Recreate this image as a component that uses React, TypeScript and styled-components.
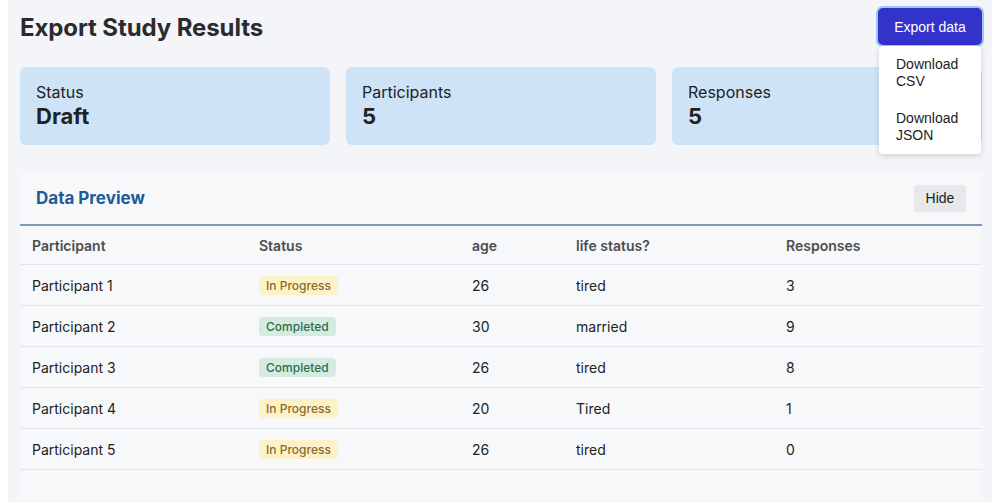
import React from "react";
import styled, { createGlobalStyle } from "styled-components";

const GlobalStyle = createGlobalStyle`
  body {
    margin: 0 10px 0 8px;
    background: #ffffff;
    font-family: Inter, "Noto Sans", sans-serif;
    color: #222;
    overflow: hidden;
  }
`;

type StatusKind = "progress" | "done";

interface Row {
  name: string;
  status: StatusKind;
  age: number;
  life: string;
  responses: number;
}

const rows: Row[] = [
  { name: "Participant 1", status: "progress", age: 26, life: "tired", responses: 3 },
  { name: "Participant 2", status: "done", age: 30, life: "married", responses: 9 },
  { name: "Participant 3", status: "done", age: 26, life: "tired", responses: 8 },
  { name: "Participant 4", status: "progress", age: 20, life: "Tired", responses: 1 },
  { name: "Participant 5", status: "progress", age: 26, life: "tired", responses: 0 },
];

const stats = [
  { label: "Status", value: "Draft" },
  { label: "Participants", value: "5" },
  { label: "Responses", value: "5" },
];

const App: React.FC = () => {
  return (
    <Page>
      <GlobalStyle />
      <Header>
        <Title>Export Study Results</Title>
        <ExportWrap>
          <ExportButton>Export data</ExportButton>
          <Menu>
            <MenuItem>Download CSV</MenuItem>
            <MenuItem>Download JSON</MenuItem>
          </Menu>
        </ExportWrap>
      </Header>

      <StatsGrid>
        {stats.map((s) => (
          <StatCard key={s.label}>
            <StatLabel>{s.label}</StatLabel>
            <StatValue>{s.value}</StatValue>
          </StatCard>
        ))}
      </StatsGrid>

      <Section>
        <SectionHeader>
          <SectionTitle>Data Preview</SectionTitle>
          <HideButton>Hide</HideButton>
        </SectionHeader>
        <Table>
          <colgroup>
            <col style={{ width: 227 }} />
            <col style={{ width: 213 }} />
            <col style={{ width: 104 }} />
            <col style={{ width: 210 }} />
            <col />
          </colgroup>
          <thead>
            <tr>
              <Th>Participant</Th>
              <Th>Status</Th>
              <Th>age</Th>
              <Th>life status?</Th>
              <Th>Responses</Th>
            </tr>
          </thead>
          <tbody>
            {rows.map((r) => (
              <tr key={r.name}>
                <Td>{r.name}</Td>
                <Td>
                  <Badge $kind={r.status}>
                    {r.status === "done" ? "Completed" : "In Progress"}
                  </Badge>
                </Td>
                <Td>{r.age}</Td>
                <Td>{r.life}</Td>
                <Td>{r.responses}</Td>
              </tr>
            ))}
          </tbody>
        </Table>
      </Section>
    </Page>
  );
};

export default App;

const Page = styled.div`
  background: #f3f5f9;
  min-height: 100vh;
  padding: 8px 10px 0 12px;
  box-sizing: border-box;
`;

const Header = styled.div`
  display: flex;
  justify-content: space-between;
  align-items: flex-start;
`;

const Title = styled.h1`
  margin: 5px 0 0;
  font-size: 24px;
  line-height: 30px;
  font-weight: 700;
  color: #2b2b2b;
  letter-spacing: -0.1px;
`;

const ExportWrap = styled.div`
  position: relative;
`;

const ExportButton = styled.button`
  display: block;
  width: 104px;
  height: 37px;
  background: #3333cc;
  color: #fff;
  border: none;
  border-radius: 5px;
  font-family: "Liberation Sans", Arial, sans-serif;
  font-size: 14px;
  box-shadow: 0 0 0 2px #9fc6ee;
  cursor: pointer;
`;

const Menu = styled.div`
  position: absolute;
  top: 38px;
  right: 1px;
  width: 102px;
  background: #fff;
  border-radius: 4px;
  box-shadow: 0 2px 6px rgba(0, 0, 0, 0.15);
  z-index: 2;
`;

const MenuItem = styled.div`
  padding: 10px 17px;
  font-family: "Liberation Sans", Arial, sans-serif;
  font-size: 14px;
  line-height: 17px;
  color: #222;
  cursor: pointer;
`;

const StatsGrid = styled.div`
  display: grid;
  grid-template-columns: repeat(3, 1fr);
  gap: 16px;
  margin-top: 22px;
`;

const StatCard = styled.div`
  background: #cfe3f7;
  border-radius: 6px;
  padding: 15px 16px 14px;
  height: 78px;
  box-sizing: border-box;
`;

const StatLabel = styled.div`
  font-size: 16px;
  line-height: 20px;
  color: #222;
`;

const StatValue = styled.div`
  font-size: 22px;
  line-height: 28px;
  font-weight: 700;
  color: #222;
`;

const Section = styled.section`
  margin-top: 27px;
  background: #f7f8fa;
  padding-bottom: 30px;
`;

const SectionHeader = styled.div`
  display: flex;
  justify-content: space-between;
  align-items: center;
  height: 52px;
  padding: 0 16px;
  border-bottom: 2px solid #7a9bbb;
`;

const SectionTitle = styled.h2`
  margin: 0;
  font-size: 17px;
  font-weight: 700;
  color: #1d5b9a;
`;

const HideButton = styled.button`
  height: 27px;
  width: 52px;
  border: none;
  border-radius: 4px;
  background: #e6e8eb;
  font-family: "Liberation Sans", Arial, sans-serif;
  font-size: 14px;
  color: #222;
  cursor: pointer;
`;

const Table = styled.table`
  width: 100%;
  border-collapse: collapse;
  table-layout: fixed;
`;

const Th = styled.th`
  text-align: left;
  height: 38px;
  padding: 0 12px;
  font-size: 14px;
  font-weight: 600;
  color: #4d4d4d;
  border-bottom: 1px solid #e1e4e8;
`;

const Td = styled.td`
  height: 40px;
  padding: 0 12px;
  font-size: 14px;
  color: #222;
  border-bottom: 1px solid #e1e4e8;
`;

const Badge = styled.span<{ $kind: StatusKind }>`
  display: inline-block;
  padding: 2px 7px;
  border-radius: 4px;
  font-size: 12px;
  line-height: 15px;
  font-weight: 500;
  background: ${(p) => (p.$kind === "done" ? "#d5ebdf" : "#fdf1c8")};
  color: ${(p) => (p.$kind === "done" ? "#2e6b4e" : "#8a6b2c")};
`;
